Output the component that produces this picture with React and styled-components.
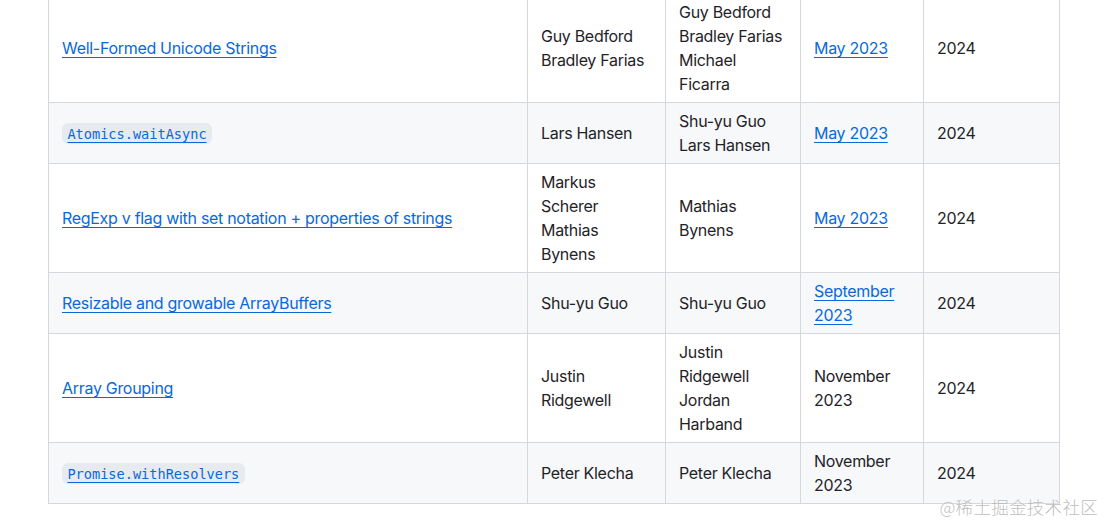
import React from "react";
import styled, { createGlobalStyle } from "styled-components";

const GlobalStyle = createGlobalStyle`
  html, body {
    margin: 0;
    padding: 0;
    background: #ffffff;
  }
  body {
    font-family: Inter, "Noto Sans", "Liberation Sans", sans-serif;
    font-size: 16px;
    line-height: 24px;
    letter-spacing: -0.3px;
    color: #1f2328;
  }
`;

const Page = styled.div`
  position: relative;
  width: 1105px;
  height: 524px;
  overflow: hidden;
  padding: 0 0 0 48px;
  box-sizing: border-box;
`;

const Table = styled.table`
  border-collapse: collapse;
  border-spacing: 0;
  table-layout: fixed;
  width: 1011px;
  margin-top: -7px;
`;

const Row = styled.tr`
  background: ${(p) => (p.$striped ? "#f6f8fa" : "#ffffff")};
  border-top: 1px solid #d4d8dc;
`;

const Cell = styled.td`
  padding: 6px 13px;
  border: 1px solid #d4d8dc;
  vertical-align: middle;
  white-space: nowrap;
`;

const Link = styled.a`
  color: #0969da;
  text-decoration: underline;
  text-underline-offset: 3px;
  text-decoration-thickness: 1px;
`;

const Code = styled.code`
  font-family: "DejaVu Sans Mono", "Liberation Mono", monospace;
  font-size: 85%;
  letter-spacing: 0;
  padding: 0.2em 0.4em;
  border-radius: 6px;
  background: rgba(175, 184, 193, 0.2);
`;

const Watermark = styled.div`
  position: absolute;
  right: 7px;
  bottom: 7px;
  font-family: "Noto Sans CJK SC", sans-serif;
  font-size: 17.5px;
  line-height: 20px;
  font-weight: 300;
  color: rgba(160, 160, 160, 0.7);
  text-shadow: 0 0 2px #ffffff;
  letter-spacing: 0.3px;
`;

const rows = [
  {
    name: "Well-Formed Unicode Strings",
    authors: ["Guy Bedford", "Bradley Farias"],
    editors: ["Guy Bedford", "Bradley Farias", "Michael", "Ficarra"],
    date: ["May 2023"],
    dateLink: true,
  },
  {
    name: "Atomics.waitAsync",
    code: true,
    authors: ["Lars Hansen"],
    editors: ["Shu-yu Guo", "Lars Hansen"],
    date: ["May 2023"],
    dateLink: true,
  },
  {
    name: "RegExp v flag with set notation + properties of strings",
    authors: ["Markus", "Scherer", "Mathias", "Bynens"],
    editors: ["Mathias", "Bynens"],
    date: ["May 2023"],
    dateLink: true,
  },
  {
    name: "Resizable and growable ArrayBuffers",
    authors: ["Shu-yu Guo"],
    editors: ["Shu-yu Guo"],
    date: ["September", "2023"],
    dateLink: true,
  },
  {
    name: "Array Grouping",
    authors: ["Justin", "Ridgewell"],
    editors: ["Justin", "Ridgewell", "Jordan", "Harband"],
    date: ["November", "2023"],
  },
  {
    name: "Promise.withResolvers",
    code: true,
    authors: ["Peter Klecha"],
    editors: ["Peter Klecha"],
    date: ["November", "2023"],
  },
];

const Lines = ({ items }) =>
  items.map((line, i) => (
    <React.Fragment key={i}>
      {i > 0 && <br />}
      {line}
    </React.Fragment>
  ));

export default function App() {
  return (
    <Page>
      <GlobalStyle />
      <Table>
        <colgroup>
          <col style={{ width: 479 }} />
          <col style={{ width: 138 }} />
          <col style={{ width: 135 }} />
          <col style={{ width: 123 }} />
          <col style={{ width: 136 }} />
        </colgroup>
        <tbody>
          {rows.map((r, i) => (
            <Row key={i} $striped={i % 2 === 1}>
              <Cell>
                {r.code ? (
                  <Code>
                    <Link href="#">{r.name}</Link>
                  </Code>
                ) : (
                  <Link href="#">{r.name}</Link>
                )}
              </Cell>
              <Cell>
                <Lines items={r.authors} />
              </Cell>
              <Cell>
                <Lines items={r.editors} />
              </Cell>
              <Cell>
                {r.dateLink ? (
                  <Link href="#">
                    <Lines items={r.date} />
                  </Link>
                ) : (
                  <Lines items={r.date} />
                )}
              </Cell>
              <Cell>2024</Cell>
            </Row>
          ))}
        </tbody>
      </Table>
      <Watermark>@稀土掘金技术社区</Watermark>
    </Page>
  );
}
